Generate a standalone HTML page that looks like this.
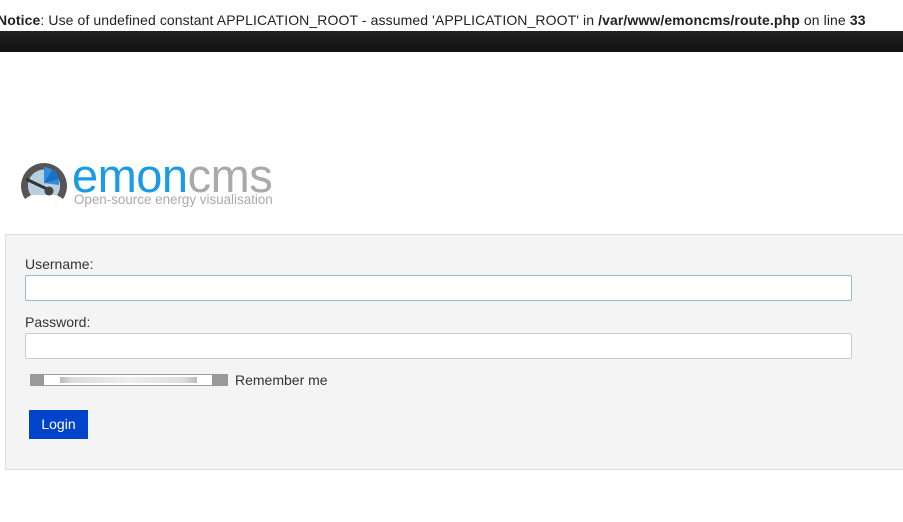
<!DOCTYPE html>
<html><head><style>
body{margin:0;width:903px;height:522px;background:#fff;font-family:"Liberation Sans",sans-serif;position:relative;overflow:hidden;color:#333}
.n{position:absolute;left:-3px;top:12px;font-size:14px;letter-spacing:0.1px;color:#222;white-space:nowrap}
.bar{position:absolute;left:0;top:31px;width:903px;height:21px;background:linear-gradient(#222,#111)}
.panel{position:absolute;left:5px;top:234px;width:910px;height:234px;background:#f4f4f4;border:1px solid #ddd}
.lab{position:absolute;left:25px;font-size:14px;color:#333}
.in{position:absolute;left:25px;width:825px;height:24px;background:#fff;border:1px solid #ccc;border-radius:2px}
.btn{position:absolute;left:29px;top:410px;width:59px;height:29px;background:#0044cc;color:#fff;font-size:14px;text-align:center;line-height:29px}
</style></head><body>
<div class="n"><b>Notice</b>: Use of undefined constant APPLICATION_ROOT - assumed 'APPLICATION_ROOT' in <b>/var/www/emoncms/route.php</b> on line <b>33</b></div>
<div class="bar"></div>
<svg style="position:absolute;left:19px;top:159px" width="50" height="44" viewBox="0 0 50 44">
<path d="M6 40 A23 23 0 1 1 44 40 L38 36 A16 16 0 1 0 12 36 Z" fill="#555"/>
<path d="M12 36 A16 16 0 1 1 38 36 Z" fill="#b8cfe0"/>
<path d="M25 24 L25 8 A16 16 0 0 1 40 26 Z" fill="#2f8fdc"/>
<path d="M25 24 L34 10 A16 16 0 0 1 40 20 Z" fill="#1a6fc0"/>
<path d="M7 20 L30 31" stroke="#333" stroke-width="3"/>
<circle cx="30" cy="32" r="4.5" fill="#444"/>
</svg>
<div style="position:absolute;left:72px;top:148px;font-size:47px;letter-spacing:-0.5px"><span style="color:#1a9be6">emon</span><span style="color:#aaa">cms</span></div>
<div style="position:absolute;left:74px;top:192px;font-size:13.4px;color:#aaa">Open-source energy visualisation</div>
<div class="panel"></div>
<div class="lab" style="top:256px">Username:</div>
<div class="in" style="top:275px;border-color:#9bc"></div>
<div class="lab" style="top:314px">Password:</div>
<div class="in" style="top:333px"></div>
<div style="position:absolute;left:30px;top:374px;width:198px;height:12px;background:#999"></div>
<div style="position:absolute;left:44px;top:375px;width:168px;height:10px;background:#fff"></div>
<div style="position:absolute;left:60px;top:377px;width:137px;height:6px;background:linear-gradient(90deg,#bbb,#ddd 10%,#eee 50%,#ddd 90%,#bbb)"></div>
<div style="position:absolute;left:235px;top:372px;font-size:14px;color:#333">Remember me</div>
<div class="btn">Login</div>
</body></html>
